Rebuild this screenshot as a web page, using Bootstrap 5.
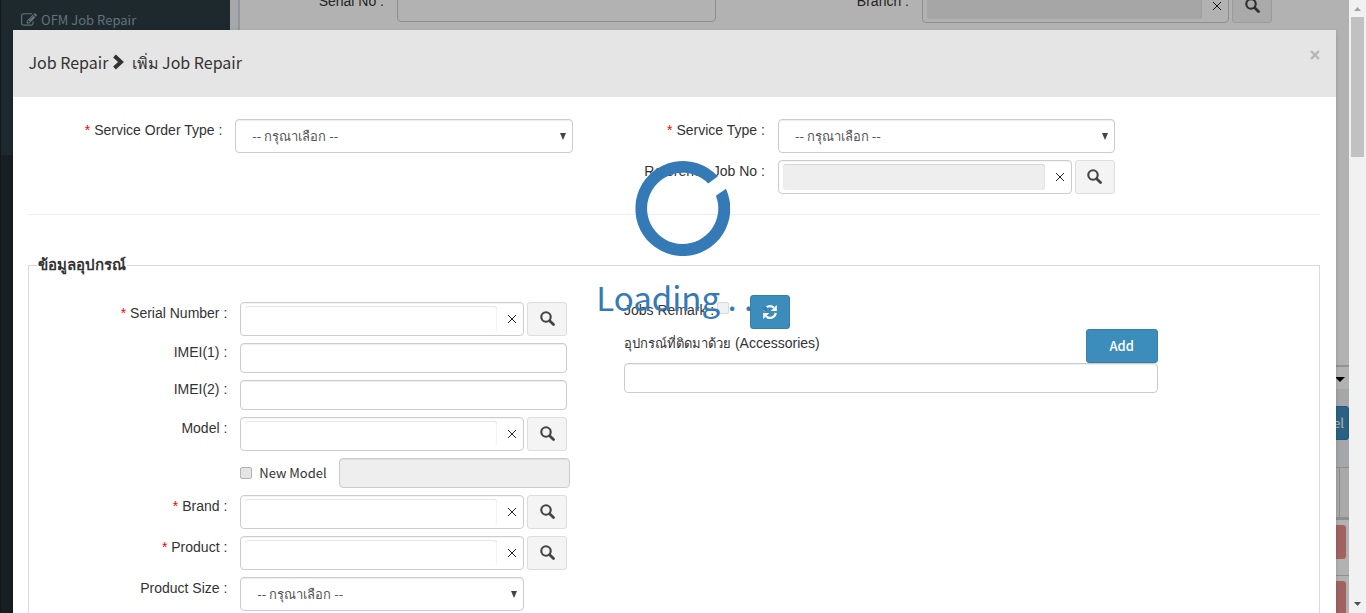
<!DOCTYPE html>
<html lang="th">
<head>
<meta charset="utf-8">
<meta name="viewport" content="width=device-width, initial-scale=1">
<title>Job Repair</title>
<link rel="stylesheet" href="https://cdn.jsdelivr.net/npm/bootstrap@5.3.0/dist/css/bootstrap.min.css">
<style>
  :root { --ui: "Noto Sans CJK SC", sans-serif; --line: #ccc; --blue: #3c8dbc; }
  body { font: 14px/20px "Liberation Sans", Arial, sans-serif; color: #333; }
  button, input, select { font-size: 14px; }
  .ui-font { font-family: var(--ui); font-size: 13px; }
  .min-w-0 { min-width: 0; }

  /* page behind the dialog */
  .side-nav { width: 230px; background: #222d32; border-left: 1px solid #1a2226; }
  .side-sub { background: #2c3b41; height: 155px; padding: 10px 0 0 20px; }
  .side-sub a { color: #8aa4af; font-family: var(--ui); font-size: 13px; }
  .page-area { background: #ecf0f5; padding-left: 8px; }
  .page-box { background: #fff; border-left: 2px solid #d2d6de; }
  .filter-panel { height: 367px; border-bottom: 2px solid #d2d2d2; overflow: hidden; }
  .filter-grid { display: grid; grid-template-columns: 157fr 319fr 206fr 350fr 77fr; margin-top: -11px; }
  .filter-grid .form-tag { padding-top: 2px; }
  .filter-grid .form-control { height: 33px; }
  .caret-row { height: 22px; padding-top: 4px; }
  .tool-row { height: 79px; background: #ecf0f5; padding-top: 17px; border-bottom: 1px solid #ccc; }
  .cell-row { height: 52px; background: #f3f3f3; border-bottom: 3px solid #ccc; }
  .cell-row span { width: 10px; border-left: 1px solid #ccc; }
  .act-row { height: 56px; padding: 5px 3px 0 0; border-bottom: 1px solid #ccc; }
  .act-row .btn { height: 34px; width: 60px; background: #e78f8d; border-radius: 3px; }
  .dim { background: rgba(0, 0, 0, .3); }

  /* dialog */
  .sheet { width: 98%; margin: 30px auto 0; box-shadow: 0 2px 4px rgba(0, 0, 0, .2); }
  .sheet-head { background: #e5e5e5; padding: 15px; height: 67px; }
  .sheet-head h4 { font: 400 16px/35px var(--ui); }
  .sheet-head h4 svg { vertical-align: -1px; margin-right: 3px; }
  .sheet-head .close-x { color: #000; opacity: .2; line-height: 0; padding: 5px 1px; }
  .sheet-main { padding: 22px 16px 0 15px; }
  .top-grid { display: grid; grid-template-columns: 207fr 338fr 205fr 337fr 205fr; row-gap: 7px; }
  .rule { border-top: 1px solid #eee; margin-top: 20px; }
  .device { border: 1px solid #d9d9d9; margin-top: 40px; padding: 0 0 40px; }
  .device legend { font-size: 15px; line-height: 20px; font-weight: 700; margin: 0 0 20px 8px; padding: 0 1px; }
  .device-grid { display: grid; grid-template-columns: 211fr 327fr 57fr 534fr 161fr; }
  .dev-fields { display: grid; grid-column: 1 / 3; grid-template-columns: 211fr 327fr; row-gap: 7px; margin-top: 7px; align-content: start; }

  .form-tag { text-align: right; padding: 1px 13px 0 0; line-height: 20px; }
  .form-tag.low { line-height: 18px; padding-top: 0; }
  .form-tag i { color: #f00; font-style: normal; }
  .form-control, .form-select { border: 1px solid var(--line); border-radius: 4px; font-size: 13px; line-height: 20px; padding: 4px 12px; height: 30px; color: #555; box-shadow: inset 0 1px 1px rgba(0, 0, 0, .075); }
  .form-select { height: 34px; padding: 6px 16px; font-family: var(--ui);
    background-image: url("data:image/svg+xml,%3csvg xmlns='http://www.w3.org/2000/svg' viewBox='0 0 6 7'%3e%3cpath fill='%23444' d='M0 0h6L3 7z'/%3e%3c/svg%3e");
    background-size: 6px 7px; background-position: right 6px center; }
  .form-control:disabled { background: #eee; }
  .pick { height: 34px; gap: 3px; }
  .pick-box { border: 1px solid var(--line); border-radius: 4px; padding: 3px 4px; background: #fff; box-shadow: inset 0 1px 1px rgba(0, 0, 0, .05); }
  .pick-box input { border: 0; border-radius: 3px; min-width: 0; height: 26px; box-shadow: inset 0 1px 1px rgba(0, 0, 0, .1), inset -1px 0 1px rgba(0, 0, 0, .04); }
  .pick-box input:disabled { background: #eee; }
  .pick-box button { width: 22px; padding: 0 0 0 8px; line-height: 0; }
  .btn-find { width: 40px; background: #f4f4f4; border: 1px solid #ddd; border-radius: 3px; padding: 0 0 2px; color: #444; line-height: 0; }
  .btn-blue { background: var(--blue); border: 1px solid #367fa9; border-radius: 3px; color: #fff; height: 34px; padding: 0; }
  .btn-sync { width: 40px; line-height: 0; }
  .btn-add { width: 72px; font: 500 13px/20px var(--ui); }
  .tick { width: 12px; height: 12px; margin: 0; }
  .tick.form-check-input { border: 1px solid #b4b4b4; border-radius: 2px; background-color: #e4e4e4; }
  .tick.faint { opacity: .5; }
  .new-model { padding-left: 7px; }
  .swap-input { flex: 0 0 231px; margin-right: -3px; }
  .size-cell { padding-right: 43px; }
  .remark { height: 34px; }
  .remark label { width: 93px; padding-bottom: 4px; }
  .remark .tick { margin-bottom: 8px; }
  .remark .btn-sync { margin-left: 21px; }
  .accessory { height: 34px; padding-top: 4px; }
  .accessory span { font-size: 13px; }

  /* busy indicator */
  .busy { color: #337ab7; font: 33px/48px var(--ui); padding-top: 161px; white-space: nowrap; }
  .busy svg { display: block; margin: 0 auto 17px; }

  .bar-track { width: 17px; background: #f1f1f1; padding: 0 2px; }
  .bar-track .tip { height: 17px; }
  .bar-track .thumb { height: 140px; background: #c1c1c1; }
</style>
</head>
<body>
<svg class="d-none" aria-hidden="true">
  <symbol id="find" viewBox="0 0 14 14"><circle cx="5.6" cy="5.6" r="4.4" fill="none" stroke="currentColor" stroke-width="2"/><path d="M9 9l3.6 3.6" stroke="currentColor" stroke-width="2.6" stroke-linecap="round"/></symbol>
  <symbol id="cross" viewBox="0 0 10 10"><path d="M1 1l8 8M9 1L1 9" stroke="#222" stroke-width="1"/></symbol>
</svg>
<div class="d-flex vh-100 overflow-hidden">
  <div class="flex-fill position-relative overflow-hidden min-w-0">
    <div class="d-flex h-100">
      <nav class="side-nav flex-shrink-0">
        <div class="side-sub">
          <a href="#" class="d-flex align-items-center gap-1 text-decoration-none">
            <svg width="16" height="16" viewBox="0 0 1792 1792" fill="currentColor"><path d="M888 1184l116-116-152-152-116 116v56h96v96h56zm440-720q-16-16-33 1l-350 350q-17 17-1 33t33-1l350-350q17-17 1-33zm80 594v190q0 119-84.500 203.500t-203.500 84.500h-832q-119 0-203.500-84.500t-84.500-203.500v-832q0-119 84.500-203.500t203.500-84.500h832q63 0 117 25 15 7 18 23 3 17-9 29l-49 49q-14 14-32 8-23-6-45-6h-832q-66 0-113 47t-47 113v832q0 66 47 113t113 47h832q66 0 113-47t47-113v-126q0-13 9-22l64-64q15-15 35-7t20 29zm-96-738l288 288-672 672h-288v-288zm444 132l-92 92-288-288 92-92q28-28 68-28t68 28l152 152q28 28 28 68t-28 68z"/></svg>
            OFM Job Repair</a>
        </div>
      </nav>
      <div class="page-area flex-fill min-w-0">
        <div class="page-box">
          <div class="filter-panel">
            <div class="filter-grid">
              <label class="form-tag" for="bgSerial">Serial No :</label>
              <div><input id="bgSerial" class="form-control"></div>
              <label class="form-tag" for="bgBranch">Branch :</label>
              <div class="pick d-flex">
                <div class="pick-box d-flex flex-fill"><input id="bgBranch" class="flex-fill" disabled><button class="btn border-0" aria-label="Clear"><svg width="10" height="10"><use href="#cross"/></svg></button></div>
                <button class="btn btn-find" aria-label="Search"><svg width="15" height="15"><use href="#find"/></svg></button>
              </div>
            </div>
          </div>
          <div class="caret-row d-flex justify-content-end align-items-center pe-1"><svg width="10" height="6"><path d="M0 0h10L5 5z"/></svg></div>
          <div class="tool-row text-end"><button class="btn btn-blue ui-font ps-3 pe-1">Excel</button></div>
          <div class="cell-row d-flex justify-content-end"><span></span></div>
          <div class="act-row text-end"><button class="btn" aria-label="Delete"></button></div>
          <div class="act-row text-end"><button class="btn" aria-label="Delete"></button></div>
        </div>
      </div>
    </div>

    <div class="dim position-absolute top-0 start-0 w-100 h-100 overflow-hidden">
      <div class="sheet bg-white" role="dialog" aria-labelledby="sheetTitle">
        <div class="sheet-head d-flex justify-content-between align-items-start">
          <h4 id="sheetTitle" class="m-0">Job Repair <svg width="13" height="16" viewBox="0 0 13 16"><path d="M2.500 2L9 8 2.500 14" fill="none" stroke="#333" stroke-width="4"/></svg> เพิ่ม Job Repair</h4>
          <button class="btn border-0 close-x" aria-label="Close"><svg width="10" height="10" viewBox="0 0 10 10"><path d="M1 1l8 8M9 1L1 9" stroke="#000" stroke-width="2.400"/></svg></button>
        </div>
        <form class="sheet-main">
          <div class="top-grid">
            <label class="form-tag" for="orderType"><i>*</i> Service Order Type :</label>
            <select id="orderType" class="form-select"><option>-- กรุณาเลือก --</option></select>
            <label class="form-tag" for="serviceType"><i>*</i> Service Type :</label>
            <select id="serviceType" class="form-select"><option>-- กรุณาเลือก --</option></select>
            <span></span>
            <span></span><span></span>
            <label class="form-tag" for="refJob">Reference Job No :</label>
            <div class="pick d-flex">
              <div class="pick-box d-flex flex-fill"><input id="refJob" class="flex-fill" disabled><button type="button" class="btn border-0" aria-label="Clear"><svg width="10" height="10"><use href="#cross"/></svg></button></div>
              <button type="button" class="btn btn-find" aria-label="Search"><svg width="15" height="15"><use href="#find"/></svg></button>
            </div>
          </div>
          <div class="rule"></div>
          <fieldset class="device">
            <legend class="float-none w-auto">ข้อมูลอุปกรณ์</legend>
            <div class="device-grid">
              <div class="dev-fields">
                <label class="form-tag" for="serial"><i>*</i> Serial Number :</label>
                <div class="pick d-flex">
                  <div class="pick-box d-flex flex-fill"><input id="serial" class="flex-fill"><button type="button" class="btn border-0" aria-label="Clear"><svg width="10" height="10"><use href="#cross"/></svg></button></div>
                  <button type="button" class="btn btn-find" aria-label="Search"><svg width="15" height="15"><use href="#find"/></svg></button>
                </div>
                <label class="form-tag low" for="imei1">IMEI(1) :</label>
                <input id="imei1" class="form-control">
                <label class="form-tag low" for="imei2">IMEI(2) :</label>
                <input id="imei2" class="form-control">
                <label class="form-tag" for="model">Model :</label>
                <div class="pick d-flex">
                  <div class="pick-box d-flex flex-fill"><input id="model" class="flex-fill"><button type="button" class="btn border-0" aria-label="Clear"><svg width="10" height="10"><use href="#cross"/></svg></button></div>
                  <button type="button" class="btn btn-find" aria-label="Search"><svg width="15" height="15"><use href="#find"/></svg></button>
                </div>
                <span></span>
                <div class="d-flex align-items-center justify-content-between">
                  <div class="d-flex align-items-center"><input type="checkbox" id="newModel" class="form-check-input tick"><label for="newModel" class="ui-font new-model">New Model</label></div>
                  <input class="form-control swap-input" aria-label="New model name" disabled>
                </div>
                <label class="form-tag" for="brand"><i>*</i> Brand :</label>
                <div class="pick d-flex">
                  <div class="pick-box d-flex flex-fill"><input id="brand" class="flex-fill"><button type="button" class="btn border-0" aria-label="Clear"><svg width="10" height="10"><use href="#cross"/></svg></button></div>
                  <button type="button" class="btn btn-find" aria-label="Search"><svg width="15" height="15"><use href="#find"/></svg></button>
                </div>
                <label class="form-tag" for="product"><i>*</i> Product :</label>
                <div class="pick d-flex">
                  <div class="pick-box d-flex flex-fill"><input id="product" class="flex-fill"><button type="button" class="btn border-0" aria-label="Clear"><svg width="10" height="10"><use href="#cross"/></svg></button></div>
                  <button type="button" class="btn btn-find" aria-label="Search"><svg width="15" height="15"><use href="#find"/></svg></button>
                </div>
                <label class="form-tag" for="size">Product Size :</label>
                <div class="size-cell"><select id="size" class="form-select"><option>-- กรุณาเลือก --</option></select></div>
              </div>
              <span></span>
              <div>
                <div class="remark d-flex align-items-center">
                  <label for="remark">Jobs Remark :</label>
                  <input type="checkbox" id="remark" class="form-check-input tick faint">
                  <button type="button" class="btn btn-blue btn-sync" aria-label="Refresh"><svg width="16" height="16" viewBox="0 0 16 16"><path d="M2.300 7.200A5.700 5.700 0 0 1 11.800 3.600M13.700 8.800A5.700 5.700 0 0 1 4.200 12.400" fill="none" stroke="#fff" stroke-width="2.200"/><path d="M14.800 1v6H8.800zM1.200 15V9h6z" fill="#fff"/></svg></button>
                </div>
                <div class="d-flex justify-content-between">
                  <label for="accessory" class="accessory"><span>อุปกรณ์ที่ติดมาด้วย</span> (Accessories)</label>
                  <button type="button" class="btn btn-blue btn-add">Add</button>
                </div>
                <input id="accessory" class="form-control">
              </div>
            </div>
          </fieldset>
        </form>
      </div>
    </div>
  </div>
  <div class="bar-track d-flex flex-column" aria-hidden="true">
    <svg class="tip" width="13" height="17" viewBox="0 0 13 17"><path d="M3 11h7L6.500 7z" fill="#a3a3a3"/></svg>
    <div class="thumb"></div>
    <svg class="tip mt-auto" width="13" height="17" viewBox="0 0 13 17"><path d="M3 6h7L6.500 10z" fill="#505050"/></svg>
  </div>
</div>
<div class="busy position-absolute top-0 start-50 translate-middle-x pe-none" role="status">
  <svg width="95" height="95" viewBox="-47.500 -47.500 95 95"><path fill="#337ab7" d="M35-32.100A47.500 47.500 0 1 0 43.200-19.800L33.200-12.800A35.600 35.600 0 1 1 25.400-25Z"/></svg>
  Loading . . .
</div>
<script src="https://cdn.jsdelivr.net/npm/bootstrap@5.3.0/dist/js/bootstrap.bundle.min.js"></script>
</body>
</html>
